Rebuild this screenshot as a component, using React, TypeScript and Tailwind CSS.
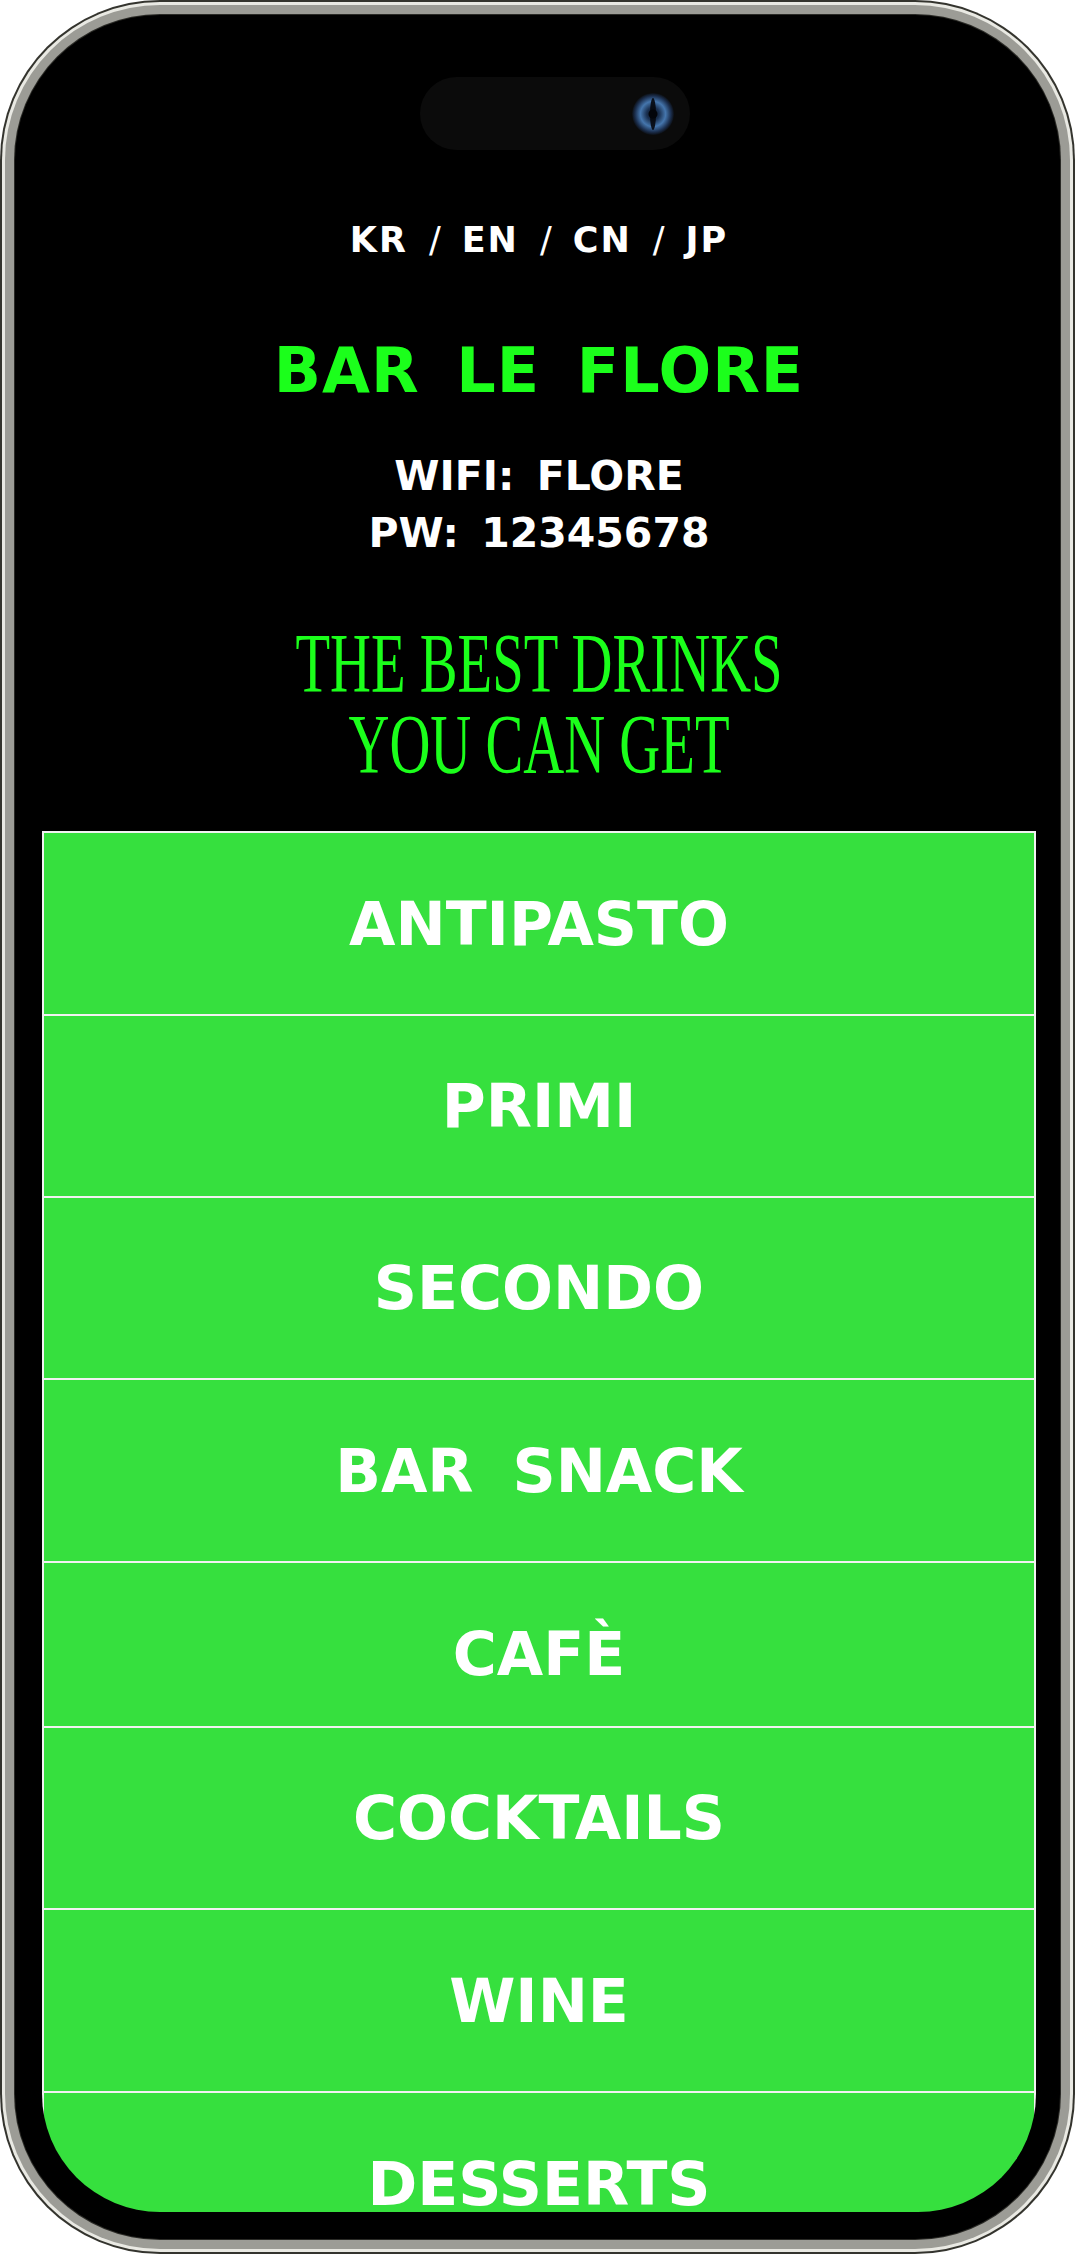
const menuItems = [
  { label: "ANTIPASTO", rowClass: "h-[183px]" },
  { label: "PRIMI", rowClass: "h-[182px]" },
  { label: "SECONDO", rowClass: "h-[182px]" },
  { label: "BAR SNACK", rowClass: "h-[183px]" },
  { label: "CAFÈ", rowClass: "h-[165px] pt-[18px]" },
  { label: "COCKTAILS", rowClass: "h-[182px]" },
  { label: "WINE", rowClass: "h-[183px]" },
  { label: "DESSERTS", rowClass: "h-[183px]" },
];

const languages = ["KR", "EN", "CN", "JP"];

// front camera lens inside the island
const CameraLens = () => (
  <svg width="44" height="44" viewBox="0 0 44 44">
    <defs>
      <radialGradient id="lens" cx="50%" cy="50%" r="50%">
        <stop offset="0%" stopColor="#0a1220" />
        <stop offset="30%" stopColor="#1a3050" />
        <stop offset="60%" stopColor="#4576ad" />
        <stop offset="85%" stopColor="#1c3050" />
        <stop offset="100%" stopColor="#0c0f14" />
      </radialGradient>
    </defs>
    <circle cx="22" cy="22" r="21" fill="url(#lens)" />
    <ellipse cx="22" cy="22" rx="3" ry="16" fill="#05080d" opacity="0.9" />
    <circle cx="22" cy="22" r="4.5" fill="#03050a" />
  </svg>
);

const MenuRow = ({ label, rowClass }: { label: string; rowClass: string }) => {
  return (
    <button
      className={`flex w-full shrink-0 items-center justify-center border-b-2 border-[#f2f2f2] bg-[#36e03e] ${rowClass}`}
    >
      <span className="font-['DejaVu_Sans',sans-serif] text-[60px] font-bold leading-none text-white [word-spacing:18px]">
        {label}
      </span>
    </button>
  );
};

const App = () => {
  return (
    <div className="min-h-screen bg-white">
      <div className="h-[2254px] w-[1075px] rounded-[160px] bg-[#34342e] p-[2px]">
        <div className="h-full w-full rounded-[158px] bg-[#e9e9e3] p-[3px]">
          <div className="h-full w-full rounded-[155px] bg-[#9c9c96] p-[10px]">
            <div className="h-full w-full rounded-[145px] bg-black pb-[27px] pl-[27px] pr-[24px] pt-[27px] shadow-[0_0_0_1px_#2a2a26]">
              <div className="flex h-full w-full flex-col overflow-hidden rounded-[118px] bg-black">
                {/* dynamic island */}
                <div className="ml-[378px] mt-[35px] flex h-[73px] w-[270px] shrink-0 items-center justify-end rounded-full bg-[#0b0b0b] pr-[15px]">
                  <CameraLens />
                </div>

                <div className="mt-[73px] flex shrink-0 justify-center gap-[21px] font-['DejaVu_Sans',sans-serif] text-[35px] font-bold leading-none text-white">
                  {languages.map((lang, i) => (
                    <div key={lang} className="flex gap-[21px]">
                      {i > 0 && <span className="font-normal">/</span>}
                      <span className="tracking-[2px]">{lang}</span>
                    </div>
                  ))}
                </div>

                <h1 className="mt-[82px] shrink-0 text-center font-['DejaVu_Sans',sans-serif] text-[62px] font-bold leading-none tracking-[1px] text-[#1bff1b] [word-spacing:14px]">
                  BAR LE FLORE
                </h1>

                <div className="mt-[46px] shrink-0 text-center font-['DejaVu_Sans',sans-serif] text-[41px] font-bold leading-[57px] text-white [word-spacing:8px]">
                  <p>WIFI: FLORE</p>
                  <p>PW: 12345678</p>
                </div>

                <div className="mt-[61px] shrink-0 scale-x-[0.675] text-center font-['Liberation_Serif',serif] text-[84px] font-normal leading-[81px] text-[#1bff1b]">
                  <p>THE BEST DRINKS</p>
                  <p>YOU CAN GET</p>
                </div>

                <nav className="mt-[46px] flex shrink-0 flex-col border-x-2 border-t-2 border-[#f2f2f2]">
                  {menuItems.map((item) => (
                    <MenuRow key={item.label} label={item.label} rowClass={item.rowClass} />
                  ))}
                </nav>
              </div>
            </div>
          </div>
        </div>
      </div>
    </div>
  );
};

export default App;
